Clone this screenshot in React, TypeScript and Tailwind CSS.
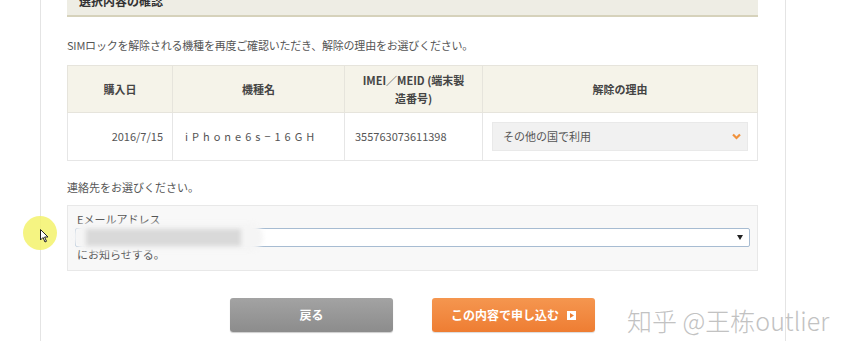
import React from 'react';

const jp = { fontFamily: '"Noto Sans CJK JP", "Noto Sans", sans-serif' };

const Chevron = () => (
  <svg width="9" height="7" viewBox="0 0 9 7">
    <path d="M1 1.5 L4.5 5 L8 1.5" fill="none" stroke="#f0923c" strokeWidth="2.2" />
  </svg>
);

const App: React.FC = () => {
  return (
    <div className="relative w-[861px] h-[355px] overflow-hidden bg-white text-[#555]" style={jp}>
      <div className="ml-[40px] w-[746px] h-full border-x border-[#e4e4e4] pl-[26px] pr-[27px]">
        {/* heading bar */}
        <div className="mt-[-14px] h-[31px] flex items-center px-[12px] bg-[#eeede4] border-b-2 border-[#d6d2bb]">
          <span className="text-[12px] font-bold text-[#333]">選択内容の確認</span>
        </div>

        <p className="mt-[20px] text-[11px] leading-[16px] tracking-[-0.2px]">
          SIMロックを解除される機種を再度ご確認いただき、解除の理由をお選びください。
        </p>

        <table className="mt-[12px] w-full border-collapse text-[11px]">
          <colgroup>
            <col className="w-[105px]" />
            <col className="w-[172px]" />
            <col className="w-[138px]" />
            <col />
          </colgroup>
          <thead>
            <tr className="h-[47px] bg-[#f5f3e9]">
              <th className="border border-[#e6e4dc] font-bold text-[#444]">購入日</th>
              <th className="border border-[#e6e4dc] font-bold text-[#444]">機種名</th>
              <th className="border border-[#e6e4dc] font-bold text-[#444] leading-[18px] px-[14px]">
                IMEI／MEID (端末製造番号)
              </th>
              <th className="border border-[#e6e4dc] font-bold text-[#444]">解除の理由</th>
            </tr>
          </thead>
          <tbody>
            <tr className="h-[48px]">
              <td className="border border-[#e6e6e6] text-right pr-[9px]">2016/7/15</td>
              <td className="border border-[#e6e6e6] pl-[12px] tracking-[4px] whitespace-nowrap">iPhone6s−16GH</td>
              <td className="border border-[#e6e6e6] pl-[10px]">355763073611398</td>
              <td className="border border-[#e6e6e6] px-[9px]">
                <div className="h-[29px] flex items-center justify-between pl-[10px] pr-[6px] bg-[#f1f1f1] border border-[#e9e9e9]">
                  <span>その他の国で利用</span>
                  <Chevron />
                </div>
              </td>
            </tr>
          </tbody>
        </table>

        <p className="mt-[18px] text-[11px] leading-[16px]">連絡先をお選びください。</p>

        <div className="relative mt-[10px] bg-[#f8f8f8] border border-[#e8e8e8] pt-[6px] pb-[9px] px-[7px] text-[11px] leading-[14px]">
          <div className="pl-[2px]">Eメールアドレス</div>
          <div className="mt-[2px] h-[19px] bg-white border border-[#a7bcd2] rounded-[2px] flex items-center justify-end pr-[6px]">
            <svg width="6" height="5" viewBox="0 0 6 5">
              <path d="M0 0 H6 L3 5 Z" fill="#222" />
            </svg>
          </div>
          <div className="pl-[2px]">にお知らせする。</div>
          {/* blurred address */}
          <div className="absolute left-[5px] top-[17px] w-[190px] h-[28px] rounded-full bg-[#f5f5f5] blur-[2px]" />
          <div className="absolute left-[18px] top-[23px] w-[155px] h-[17px] bg-[#d9d9d9] blur-[2px]" />
        </div>

        <div className="mt-[27px] flex justify-center gap-[39px]">
          <button className="w-[163px] h-[34px] rounded-[3px] bg-gradient-to-b from-[#a3a3a3] to-[#8c8c8c] shadow-[0_1px_1px_rgba(0,0,0,0.2)] text-white text-[12px] font-bold">
            戻る
          </button>
          <button className="w-[163px] h-[34px] rounded-[3px] bg-gradient-to-b from-[#f5964f] to-[#ee7d32] shadow-[0_1px_1px_rgba(0,0,0,0.15)] text-white text-[12px] font-bold flex items-center justify-center gap-[8px]">
            <span>この内容で申し込む</span>
            <span className="w-[9px] h-[9px] bg-white flex items-center justify-center">
              <svg width="4" height="5" viewBox="0 0 4 5">
                <path d="M0 0 L4 2.5 L0 5 Z" fill="#ee7d32" />
              </svg>
            </span>
          </button>
        </div>
      </div>

      {/* cursor highlight */}
      <div className="absolute left-[23px] top-[216px] w-[34px] h-[34px] rounded-full bg-[#f3f26c]/85" />
      <svg className="absolute left-[40px] top-[229px]" width="10" height="14" viewBox="0 0 10 14">
        <path d="M0.5 0.5 L0.5 11 L3 8.5 L5 13 L6.5 12.3 L4.6 8 L8 8 Z" fill="#fff" stroke="#222" strokeWidth="1" />
      </svg>

      {/* watermark */}
      <div
        className="absolute left-[627px] top-[304px] text-[25px] leading-[32px] font-light text-[#c2c2c2] [text-shadow:1px_1px_0_#fff]"
        style={{ fontFamily: '"Noto Sans CJK SC", "Noto Sans", sans-serif' }}
      >
        知乎 @王栋outlier
      </div>
    </div>
  );
};

export default App;
